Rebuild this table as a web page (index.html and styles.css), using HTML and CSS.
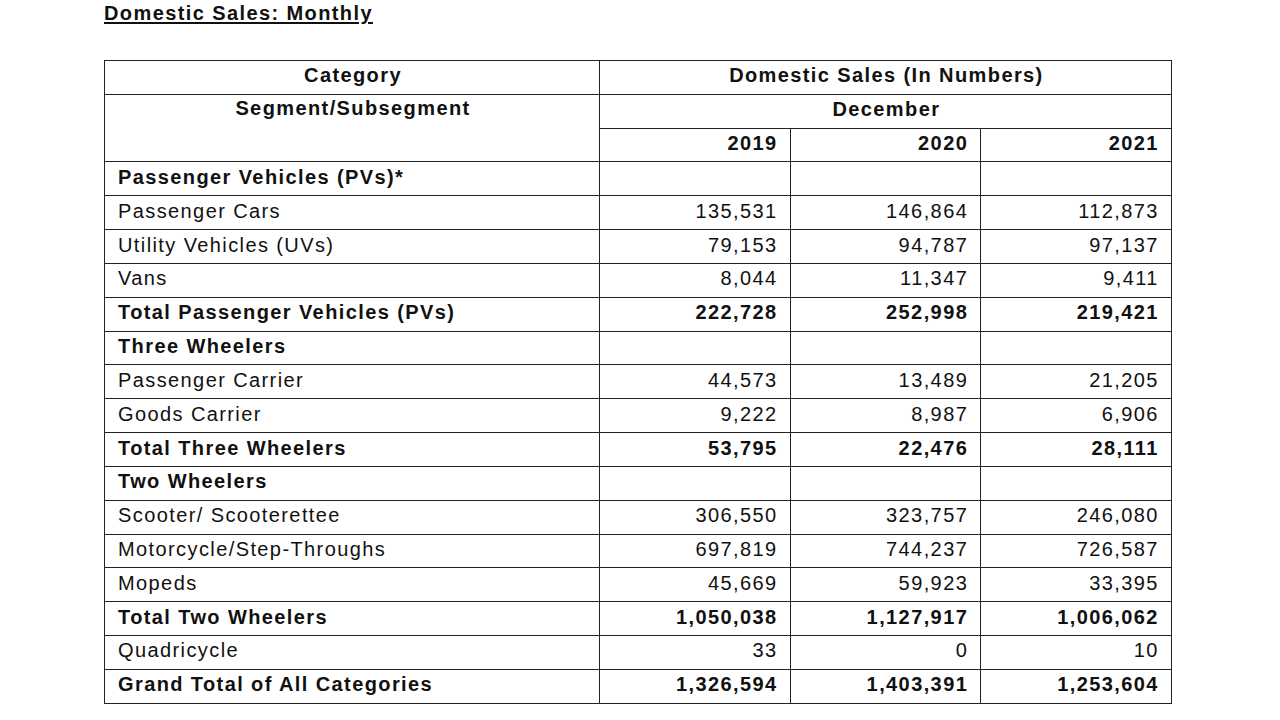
FILE: index.html
```html
<!DOCTYPE html>
<html>
<head>
<meta charset="utf-8">
<link rel="stylesheet" href="styles.css">
</head>
<body>
<div class="page">
  <h1 class="title">Domestic Sales: Monthly</h1>
  <table class="sales">
    <colgroup>
      <col class="c-cat"><col class="c-num"><col class="c-num"><col class="c-num">
    </colgroup>
    <tr class="b"><td class="center">Category</td><td class="center" colspan="3">Domestic Sales (In Numbers)</td></tr>
    <tr class="b"><td class="center seg" rowspan="2">Segment/Subsegment</td><td class="center" colspan="3">December</td></tr>
    <tr class="b"><td class="num">2019</td><td class="num">2020</td><td class="num">2021</td></tr>
    <tr class="b"><td>Passenger Vehicles (PVs)*</td><td></td><td></td><td></td></tr>
    <tr><td>Passenger Cars</td><td class="num">135,531</td><td class="num">146,864</td><td class="num">112,873</td></tr>
    <tr><td>Utility Vehicles (UVs)</td><td class="num">79,153</td><td class="num">94,787</td><td class="num">97,137</td></tr>
    <tr><td>Vans</td><td class="num">8,044</td><td class="num">11,347</td><td class="num">9,411</td></tr>
    <tr class="b"><td>Total Passenger Vehicles (PVs)</td><td class="num">222,728</td><td class="num">252,998</td><td class="num">219,421</td></tr>
    <tr class="b"><td>Three Wheelers</td><td></td><td></td><td></td></tr>
    <tr><td>Passenger Carrier</td><td class="num">44,573</td><td class="num">13,489</td><td class="num">21,205</td></tr>
    <tr><td>Goods Carrier</td><td class="num">9,222</td><td class="num">8,987</td><td class="num">6,906</td></tr>
    <tr class="b"><td>Total Three Wheelers</td><td class="num">53,795</td><td class="num">22,476</td><td class="num">28,111</td></tr>
    <tr class="b"><td>Two Wheelers</td><td></td><td></td><td></td></tr>
    <tr><td>Scooter/ Scooterettee</td><td class="num">306,550</td><td class="num">323,757</td><td class="num">246,080</td></tr>
    <tr><td>Motorcycle/Step-Throughs</td><td class="num">697,819</td><td class="num">744,237</td><td class="num">726,587</td></tr>
    <tr><td>Mopeds</td><td class="num">45,669</td><td class="num">59,923</td><td class="num">33,395</td></tr>
    <tr class="b"><td>Total Two Wheelers</td><td class="num">1,050,038</td><td class="num">1,127,917</td><td class="num">1,006,062</td></tr>
    <tr><td>Quadricycle</td><td class="num">33</td><td class="num">0</td><td class="num">10</td></tr>
    <tr class="b"><td>Grand Total of All Categories</td><td class="num">1,326,594</td><td class="num">1,403,391</td><td class="num">1,253,604</td></tr>
  </table>
</div>
</body>
</html>
```
FILE: styles.css
```css
html, body {
  margin: 0;
  padding: 0;
  background: #ffffff;
}
body {
  font-family: "Liberation Sans", Arial, sans-serif;
  color: #111111;
}
.page {
  padding: 0 0 0 104px;
}
.title {
  margin: 0;
  padding-top: 2px;
  font-size: 20px;
  line-height: 23px;
  font-weight: bold;
  letter-spacing: 1.4px;
  text-decoration: underline;
  text-underline-offset: 2px;
  color: #111;
}
.sales {
  margin-top: 35px;
  border-collapse: collapse;
  table-layout: fixed;
  width: 1067px;
  font-size: 20px;
  letter-spacing: 1.4px;
}
.c-cat { width: 495px; }
.c-num { width: 190.6px; }
.sales td {
  border: 1px solid #222;
  height: 33.84px;
  padding: 0 12px 4px 13px;
  box-sizing: border-box;
  line-height: 22px;
  vertical-align: middle;
  white-space: nowrap;
}
.sales tr.b td {
  font-weight: bold;
}
.sales td.center {
  text-align: center;
  padding-left: 14px;
}
.sales td.seg {
  vertical-align: top;
  padding-top: 2px;
}
.sales td.num {
  text-align: right;
}
```
